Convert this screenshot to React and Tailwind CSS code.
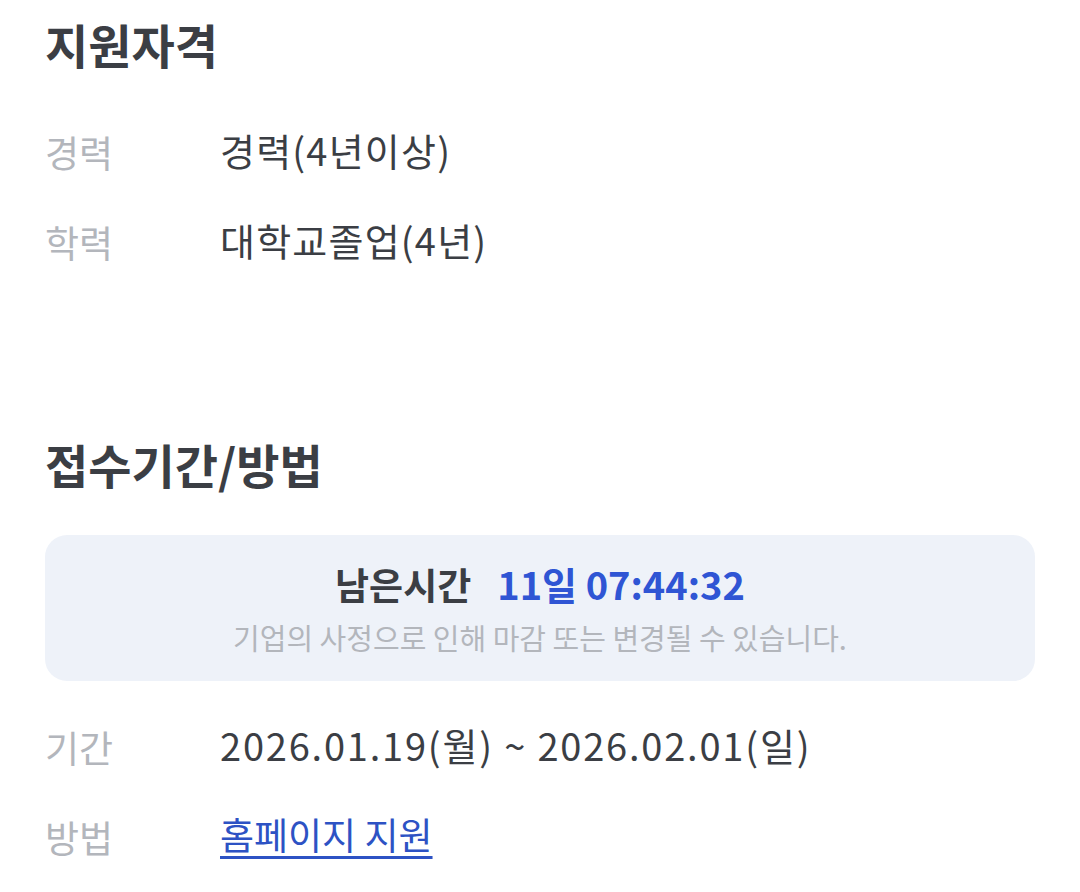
const qualification = [
  { label: "경력", value: "경력(4년이상)" },
  { label: "학력", value: "대학교졸업(4년)" },
];

const Row = ({ label, children }) => (
  <div className="flex items-center h-[90px]">
    <div className="w-[175px] shrink-0 text-[37px] text-[#b3b6bc] pt-[8px]">{label}</div>
    <div className="text-[38px] text-[#3b3e44]">{children}</div>
  </div>
);

export default function App() {
  return (
    <div
      className="w-[1080px] h-[892px] bg-white px-[45px] overflow-hidden"
      style={{ fontFamily: '"Noto Sans CJK KR", "Noto Sans", sans-serif' }}
    >
      <h2 className="mt-[16px] h-[56px] leading-[56px] text-[47px] font-bold text-[#3b3e44]">
        지원자격
      </h2>
      <div className="mt-[32px]">
        {qualification.map((q) => (
          <Row key={q.label} label={q.label}>
            <span className="tracking-[1.2px]">{q.value}</span>
          </Row>
        ))}
      </div>

      <h2 className="mt-[152px] h-[56px] leading-[56px] text-[47px] font-bold text-[#3b3e44]">
        접수기간/방법
      </h2>

      <div className="mt-[43px] h-[146px] rounded-[22px] bg-[#eef2f9] flex flex-col items-center pt-[27px]">
        <div className="h-[44px] leading-[44px] flex items-center gap-[26px] font-bold">
          <span className="text-[37px] text-[#3b3e44]">남은시간</span>
          <span className="text-[38px] text-[#2f55d4]">11일 07:44:32</span>
        </div>
        <div className="mt-[14px] h-[34px] leading-[34px] text-[29px] text-[#b3b6bc]">
          기업의 사정으로 인해 마감 또는 변경될 수 있습니다.
        </div>
      </div>

      <div className="mt-[18px]">
        <Row label="기간">
          <span className="tracking-[1.8px]">2026.01.19(월) ~ 2026.02.01(일)</span>
        </Row>
        <Row label="방법">
          <a href="#" className="text-[37px] text-[#2d52c4] underline underline-offset-[6px] decoration-[3px]">
            홈페이지 지원
          </a>
        </Row>
      </div>
    </div>
  );
}
